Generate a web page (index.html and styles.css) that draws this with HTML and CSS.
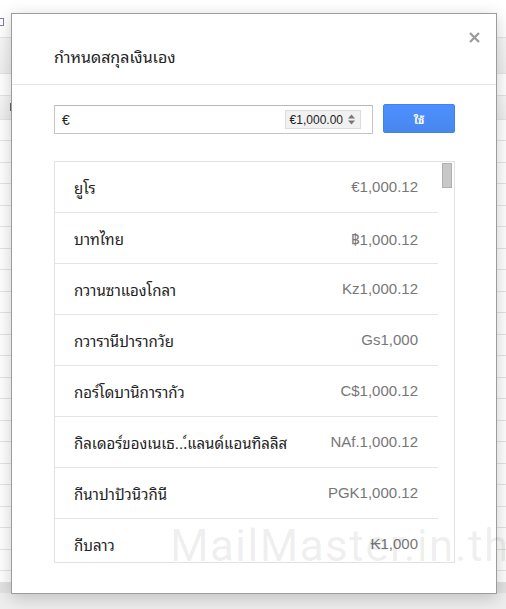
FILE: index.html
```html
<html>
<head>
  <link rel="stylesheet" href="styles.css">
</head>
<body>
  <div class="sheet">
    <div class="sheet-row top"><span class="doc-icon"></span></div>
    <div class="sheet-row band tall"></div>
    <div class="sheet-row mid"></div>
    <div class="sheet-row band first"><span class="mark"></span></div>
    <div class="sheet-row"></div><div class="sheet-row"></div><div class="sheet-row"></div>
    <div class="sheet-row"></div><div class="sheet-row"></div><div class="sheet-row"></div>
    <div class="sheet-row"></div><div class="sheet-row"></div><div class="sheet-row"></div>
    <div class="sheet-row"></div><div class="sheet-row"></div><div class="sheet-row"></div>
    <div class="sheet-row"></div><div class="sheet-row"></div><div class="sheet-row"></div>
    <div class="sheet-row"></div><div class="sheet-row"></div><div class="sheet-row"></div>
    <div class="sheet-row"></div><div class="sheet-row"></div><div class="sheet-row"></div>
    <div class="sheet-row last"></div>
    <div class="sheet-row foot"></div>
    <div class="sheet-shade"></div>
  </div>

  <div class="dialog">
    <div class="dialog-head">กำหนดสกุลเงินเอง</div>
    <span class="close">
      <svg width="11" height="11" viewBox="0 0 11 11">
        <path d="M1 1 L10 10 M10 1 L1 10" stroke="#9a9a9a" stroke-width="2.2" fill="none"/>
      </svg>
    </span>
    <div class="dialog-body">
      <div class="entry">
        <div class="amount">
          <span class="symbol">€</span>
          <span class="chip">€1,000.00
            <svg width="7" height="11" viewBox="0 0 7 11">
              <path d="M0 4.5 L3.5 0.5 L7 4.5 Z M0 6.5 L3.5 10.5 L7 6.5 Z" fill="#777"/>
            </svg>
          </span>
        </div>
        <button class="apply">ใช้</button>
      </div>

      <div class="currency-list">
        <div class="rows">
          <div class="row"><span class="name">ยูโร</span><span class="value">€1,000.12</span></div>
          <div class="row"><span class="name">บาทไทย</span><span class="value">฿1,000.12</span></div>
          <div class="row"><span class="name">กวานซาแองโกลา</span><span class="value">Kz1,000.12</span></div>
          <div class="row"><span class="name">กวารานีปารากวัย</span><span class="value">Gs1,000</span></div>
          <div class="row"><span class="name">กอร์โดบานิการากัว</span><span class="value">C$1,000.12</span></div>
          <div class="row"><span class="name">กิลเดอร์ของเนเธ...์แลนด์แอนทิลลิส</span><span class="value">NAf.1,000.12</span></div>
          <div class="row"><span class="name">กีนาปาปัวนิวกินี</span><span class="value">PGK1,000.12</span></div>
          <div class="row"><span class="name">กีบลาว</span><span class="value">₭1,000</span></div>
        </div>
        <div class="scroll"><div class="thumb"></div></div>
      </div>
    </div>
  </div>

  <div class="watermark">MailMaster.in.th</div>
</body>
</html>
```

FILE: styles.css
```css
body {
  margin: 0;
  padding: 0;
  width: 506px;
  height: 609px;
  overflow: hidden;
  background: #fff;
  font-family: "Liberation Sans", "Noto Sans Thai Looped", "Noto Sans Thai", Tahoma, sans-serif;
  color: #222;
}

/* spreadsheet behind the dialog */
.sheet {
  display: flex;
  flex-direction: column;
}

.sheet-row {
  box-sizing: border-box;
  height: 22px;
  border-bottom: 1px solid #e4e4e4;
  position: relative;
}

.sheet-row:nth-child(odd) {
  height: 21px;
}

.sheet-row.top {
  height: 38px;
}

.sheet-row.tall {
  height: 36px;
}

.sheet-row.mid {
  height: 22px;
}

.sheet-row.first {
  height: 24px;
}

.sheet-row.last {
  height: 12px;
}

.sheet-row.band {
  background: linear-gradient(#f7f7f7, #eeeeee);
}

.sheet-row.foot {
  height: 10px;
  background: #e2e2e2;
  border-bottom: none;
}

.sheet-shade {
  height: 20px;
  background: #eeeeee;
}

.doc-icon {
  position: absolute;
  left: -3px;
  top: 18px;
  width: 5px;
  height: 6px;
  border: 1px solid #8a7aa0;
}

.mark {
  position: absolute;
  left: 10px;
  top: 7px;
  width: 2px;
  height: 8px;
  background: #5a6a62;
}

/* dialog */
.dialog {
  position: absolute;
  left: 11px;
  top: 13px;
  width: 486px;
  height: 581px;
  box-sizing: border-box;
  background: #fff;
  border: 1px solid #9c9c9c;
  box-shadow: 0 4px 16px rgba(0, 0, 0, 0.2);
}

.dialog-head {
  padding: 32px 42px 14px;
  font-size: 16px;
  line-height: 24px;
  color: #222;
  border-bottom: 1px solid #e5e5e5;
}

.close {
  position: absolute;
  top: 18px;
  right: 16px;
  width: 11px;
  height: 11px;
  display: flex;
}

.dialog-body {
  padding: 20px 41px 0 42px;
}

.entry {
  display: flex;
  gap: 10px;
  height: 29px;
}

.amount {
  flex: 1;
  box-sizing: border-box;
  display: flex;
  align-items: center;
  justify-content: space-between;
  padding: 0 11px 0 7px;
  border: 1px solid #c6c6c6;
  border-top-color: #b8b8b8;
  font-size: 14px;
}

.chip {
  display: flex;
  align-items: center;
  gap: 5px;
  height: 17px;
  padding: 0 5px 0 4px;
  border: 1px solid #dcdcdc;
  background: #f1f1f1;
  font-size: 12px;
  color: #222;
}

.apply {
  width: 72px;
  height: 29px;
  margin-top: -1px;
  box-sizing: border-box;
  border: 1px solid #3f82ef;
  border-radius: 2px;
  background: linear-gradient(#4d90fe, #4787ed);
  color: #fff;
  font-family: inherit;
  font-size: 11px;
  font-weight: bold;
  padding: 0;
}

.currency-list {
  margin-top: 27px;
  height: 402px;
  box-sizing: border-box;
  border: 1px solid #e2e2e2;
  display: flex;
  overflow: hidden;
}

.rows {
  width: 383px;
}

.row {
  box-sizing: border-box;
  height: 51px;
  display: flex;
  align-items: center;
  justify-content: space-between;
  padding: 0 20px 1px 19px;
  border-bottom: 1px solid #e5e5e5;
  font-size: 15px;
}

.row .name {
  color: #222;
}

.row .value {
  color: #777;
}

.scroll {
  flex: 1;
}

.thumb {
  box-sizing: border-box;
  width: 10px;
  height: 25px;
  margin: 1px 0 0 4px;
  background: #c8c8c8;
  border: 1px solid #b0b0b0;
}

.watermark {
  position: absolute;
  left: 170px;
  top: 520px;
  font-family: Roboto, "Liberation Sans", sans-serif;
  font-size: 44px;
  letter-spacing: 1.5px;
  color: rgba(0, 0, 0, 0.08);
  white-space: nowrap;
  pointer-events: none;
}
```
